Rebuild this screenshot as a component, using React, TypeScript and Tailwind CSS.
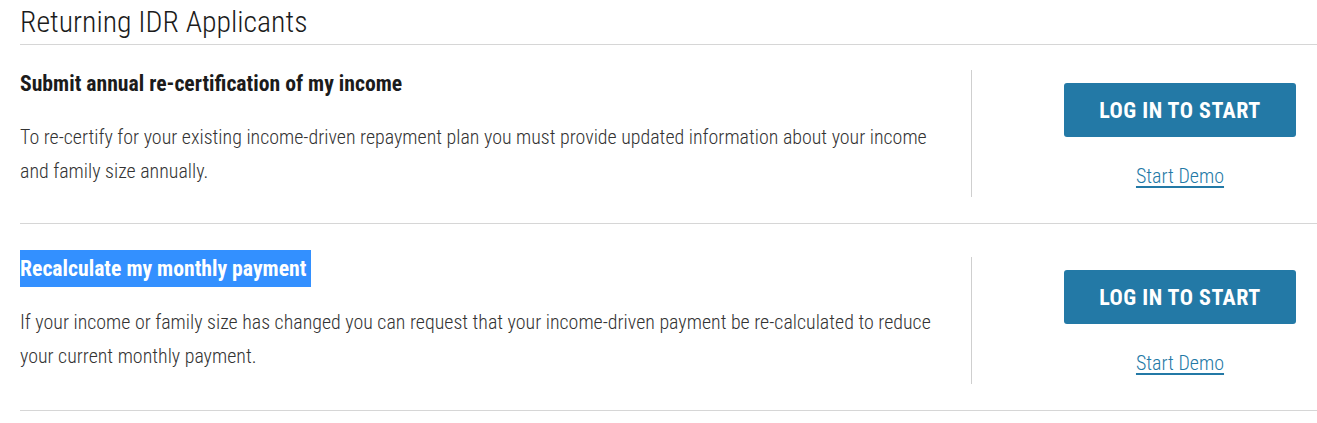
const font = "font-['Roboto',sans-serif] font-stretch-condensed";

type TaskProps = {
  title: string;
  description: string;
  selected?: boolean;
  top: string;
  dividerTop: string;
};

const Task = ({ title, description, selected, top, dividerTop }: TaskProps) => (
  <div className={`flex border-b border-[#d6d6d6] pb-[26px] ${top}`}>
    <div className="w-[951px] pr-[20px]">
      <h3 className="h-[37px] text-[21.7px] font-bold leading-[37px] text-[#1b1b1b]">
        {selected ? (
          <span className="inline-block bg-[#3390ff] pr-[5px] text-white">{title}</span>
        ) : (
          title
        )}
      </h3>
      <p className="mt-[18px] text-[19.95px] font-light leading-[34px] text-[#333333]">{description}</p>
    </div>
    <div className={`flex flex-col border-l border-[#cfcfcf] pb-[9px] pl-[92px] pt-[13px] ${dividerTop}`}>
      <button className="h-[54px] w-[232px] rounded-[3px] bg-[#2379a6] text-[22px] font-bold tracking-[0.5px] text-white">
        LOG IN TO START
      </button>
      <a href="#" className="mt-[27px] w-[232px] text-center text-[20px] font-light leading-[24px] text-[#2379a6] underline underline-offset-[3px]">
        Start Demo
      </a>
    </div>
  </div>
);

export default function App() {
  return (
    <div className={`${font} bg-white pl-5`}>
      <h2 className="border-b border-[#d6d6d6] pb-[2px] pt-[2px] text-[29.8px] font-light leading-[40px] text-[#1b1b1b]">
        Returning IDR Applicants
      </h2>
      <Task
        top="pt-[20px]"
        dividerTop="mt-[5px]"
        title="Submit annual re-certification of my income"
        description="To re-certify for your existing income-driven repayment plan you must provide updated information about your income and family size annually."
      />
      <Task
        top="pt-[26px]"
        dividerTop="mt-[7px]"
        selected
        title="Recalculate my monthly payment"
        description="If your income or family size has changed you can request that your income-driven payment be re-calculated to reduce your current monthly payment."
      />
    </div>
  );
}
